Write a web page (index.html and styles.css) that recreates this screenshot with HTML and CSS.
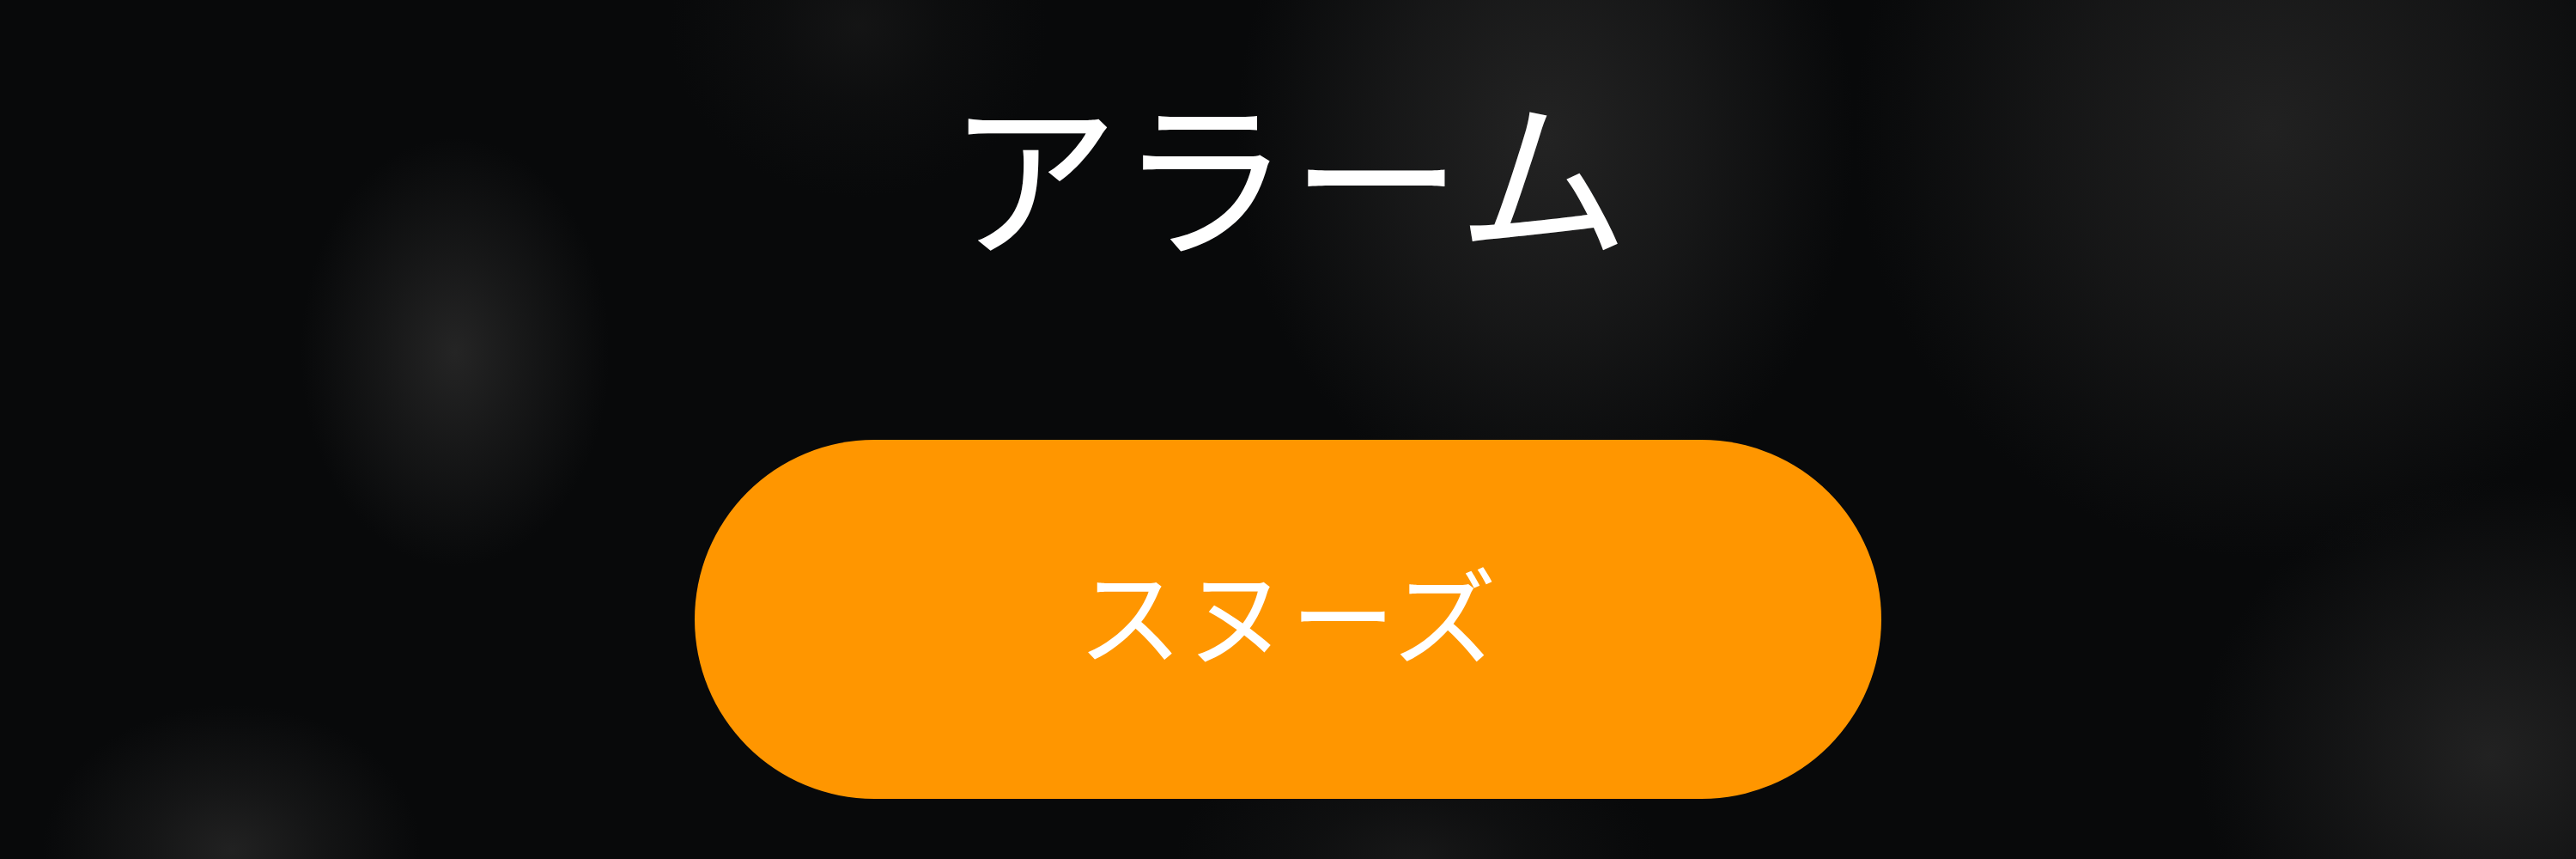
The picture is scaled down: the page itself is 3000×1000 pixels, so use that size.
FILE: index.html
```html
<!DOCTYPE html>
<html lang="ja">
<head>
<meta charset="utf-8">
<title>アラーム</title>
<link rel="stylesheet" href="styles.css">
</head>
<body>
<main class="screen">
  <h1 class="title">アラーム</h1>
  <button class="snooze" type="button">スヌーズ</button>
</main>
</body>
</html>
```

FILE: styles.css
```css
html, body {
  margin: 0;
  padding: 0;
}

body {
  width: 3000px;
  height: 1000px;
  overflow: hidden;
  background-color: #08090a;
  background-image:
    radial-gradient(ellipse 180px 250px at 530px 410px, rgba(38,38,38,0.95), rgba(38,38,38,0.5) 45%, rgba(38,38,38,0) 100%),
    radial-gradient(ellipse 220px 170px at 270px 990px, rgba(36,36,36,0.9), rgba(36,36,36,0.45) 45%, rgba(36,36,36,0) 100%),
    radial-gradient(ellipse 360px 440px at 1800px 160px, rgba(35,35,35,1), rgba(35,35,35,0.55) 50%, rgba(35,35,35,0) 100%),
    radial-gradient(ellipse 480px 500px at 2640px 150px, rgba(33,33,33,1), rgba(33,33,33,0.55) 50%, rgba(33,33,33,0) 100%),
    radial-gradient(ellipse 340px 320px at 2900px 880px, rgba(35,35,35,0.95), rgba(35,35,35,0.5) 45%, rgba(35,35,35,0) 100%),
    radial-gradient(ellipse 280px 150px at 1650px 1000px, rgba(30,30,30,0.7), rgba(30,30,30,0.3) 45%, rgba(30,30,30,0) 100%),
    radial-gradient(ellipse 220px 200px at 1000px 30px, rgba(28,28,28,0.6), rgba(28,28,28,0.25) 45%, rgba(28,28,28,0) 100%);
  font-family: "Noto Sans CJK JP", "Noto Sans", sans-serif;
  color: #ffffff;
}

.screen {
  display: flex;
  flex-direction: column;
  align-items: center;
  padding-top: 97px;
}

.title {
  margin: 0;
  font-size: 200px;
  font-weight: 400;
  line-height: 1;
  letter-spacing: 0;
}

.snooze {
  margin-top: 215px;
  width: 1382px;
  height: 418px;
  border: none;
  border-radius: 209px;
  background: #ff9600;
  color: #ffffff;
  font-family: "Noto Sans CJK JP", "Noto Sans", sans-serif;
  font-size: 122px;
  font-weight: 400;
  line-height: 1;
  padding: 0 0 20px 0;
  letter-spacing: 2px;
}
```
